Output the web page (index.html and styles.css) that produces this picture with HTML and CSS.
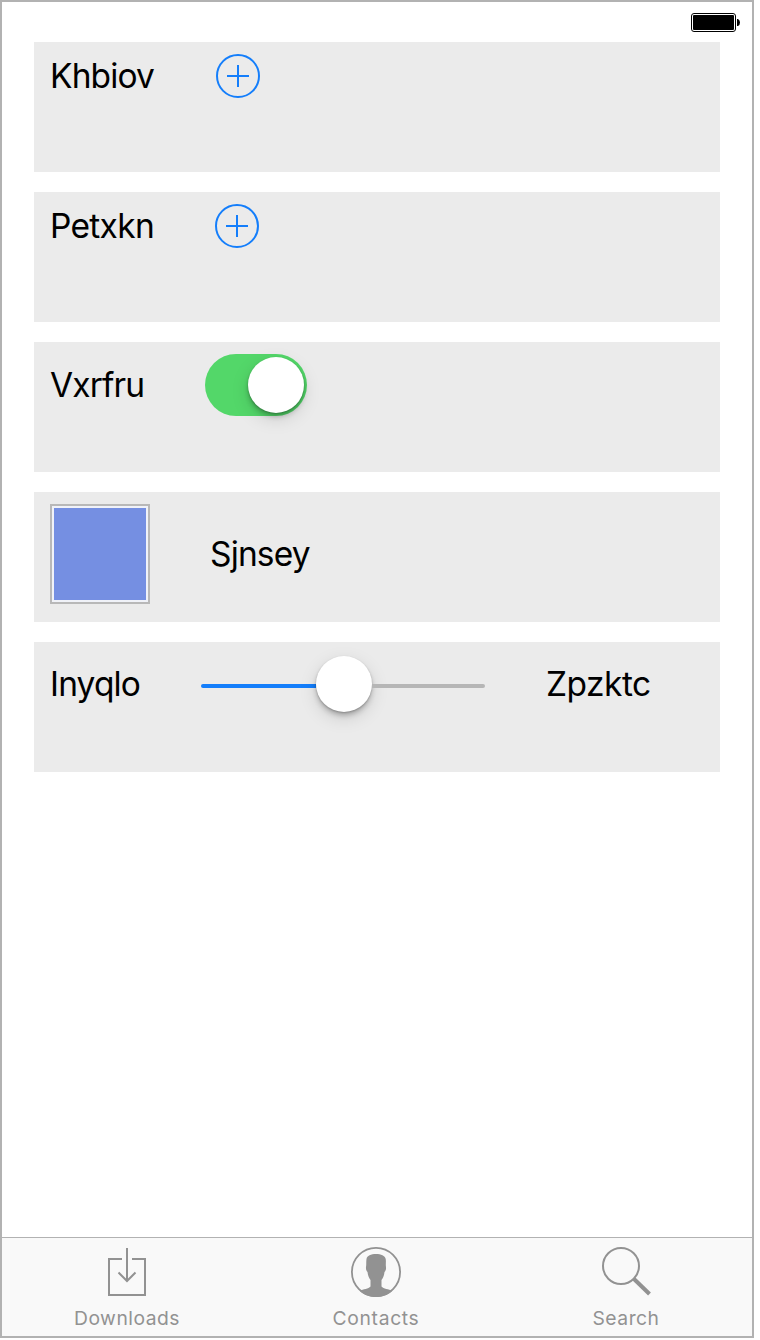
FILE: index.html
```html
<!DOCTYPE html>
<html lang="en">
<head>
<meta charset="utf-8">
<title>Settings</title>
<link rel="stylesheet" href="styles.css">
</head>
<body>
<div class="screen">
  <header class="status">
    <svg width="50" height="20" viewBox="0 0 50 20">
      <rect x=".5" y=".5" width="44" height="18" rx="2.5" fill="none" stroke="#000"/>
      <rect x="2" y="2" width="41" height="15" rx="1"/>
      <path d="M46 6h1q2 1 2 3.500t-2 3.500h-1z"/>
    </svg>
  </header>
  <main class="rows">
    <section class="row">
      <span class="label khbiov">Khbiov</span>
      <svg class="add" viewBox="0 0 44 44"><circle cx="22" cy="22" r="21"/><path d="M22 11v22M11 22h22"/></svg>
    </section>
    <section class="row">
      <span class="label petxkn">Petxkn</span>
      <svg class="add" viewBox="0 0 44 44"><circle cx="22" cy="22" r="21"/><path d="M22 11v22M11 22h22"/></svg>
    </section>
    <section class="row">
      <span class="label vxrfru">Vxrfru</span>
      <div class="toggle"><div class="knob"></div></div>
    </section>
    <section class="row">
      <div class="swatch"></div>
      <span class="label sjnsey">Sjnsey</span>
    </section>
    <section class="row">
      <span class="label inyqlo">Inyqlo</span>
      <div class="slider"><div class="track fill"></div><div class="knob"></div><div class="track rest"></div></div>
      <span class="label zpzktc">Zpzktc</span>
    </section>
  </main>
  <nav class="tabs">
    <div class="tab">
      <svg class="icon" viewBox="0 0 52 52"><path d="M21 12H8v36h36V12H31M26 1v33M17.500 25.500l8.500 8.500 8.500-8.500" fill="none" stroke="#929292" stroke-width="2"/></svg>
      <span class="caption downloads">Downloads</span>
    </div>
    <div class="tab">
      <svg class="icon" viewBox="0 0 52 52"><circle cx="26" cy="25" r="24.100" fill="none" stroke="#929292" stroke-width="1.800"/><path d="M16.500 12C17 8.500 21 7 26 7s9 1.500 9.700 5c.5 3-.2 5 .3 8 .3 3-.7 4-1.500 5-.5 4-1.500 6-3 8v6.500c2 2.500 7 2.500 11 4.200C38 48 32 50 26 50S14 48 9.500 43.700c4-1.700 9-1.700 11-4.200V33c-1.500-2-2.500-4-3-8-.8-1-1.800-2-1.500-5 .5-3 0-5 .5-8z" fill="#929292"/></svg>
      <span class="caption contacts">Contacts</span>
    </div>
    <div class="tab">
      <svg class="icon" viewBox="0 0 52 52" fill="none" stroke="#929292"><circle cx="21" cy="19" r="18" stroke-width="2"/><path d="M34 32l15.500 15" stroke-width="4"/></svg>
      <span class="caption search">Search</span>
    </div>
  </nav>
</div>
</body>
</html>
```
FILE: styles.css
```css
* { box-sizing: border-box; }
body { margin: 0; background: #fff; font-family: Inter, "Liberation Sans", sans-serif; }
svg { display: block; flex: none; }
.screen { width: 754px; height: 1338px; border: 2px solid #b2b2b2; display: flex; flex-direction: column; }
.status { height: 40px; padding: 11px 11px 0 0; display: flex; justify-content: flex-end; }
.rows { flex: 1; padding: 0 32px; display: flex; flex-direction: column; gap: 20px; }
.row { height: 130px; background: #ebebeb; padding: 12px 16px; display: flex; align-items: flex-start; }
.label { flex: none; font-size: 33.5px; line-height: 40px; color: #000; white-space: nowrap; letter-spacing: -.85px; }
.khbiov { width: 166px; padding-top: 2px; }
.petxkn { width: 165px; padding-top: 2px; letter-spacing: -.7px; }
.vxrfru { width: 155px; padding-top: 11px; }
.sjnsey { margin-left: 60px; padding-top: 30px; }
.inyqlo { width: 151px; padding-top: 10px; }
.zpzktc { margin-left: 61px; padding-top: 10px; letter-spacing: -.5px; }
.add { width: 44px; height: 44px; fill: none; stroke: #147efb; stroke-width: 2; }
.toggle { width: 102px; height: 62px; border-radius: 31px; background: #53d769; display: flex; justify-content: flex-end; padding: 3px; }
.knob { flex: none; width: 56px; height: 56px; border-radius: 50%; background: #fff; box-shadow: 0 4px 5px rgba(0,0,0,.2), 0 1px 2px rgba(0,0,0,.22), 0 6px 18px rgba(0,0,0,.13); }
.swatch { width: 100px; height: 100px; border: 2px solid #b8b8b8; padding: 2px; background: #758fe2 content-box; box-shadow: inset 0 0 0 2px #f0f2f8; }
.slider { width: 284px; height: 60px; display: flex; align-items: center; }
.track { height: 4px; margin-top: 4px; }
.fill { width: 115px; background: #147efb; border-radius: 2px 0 0 2px; }
.rest { flex: 1; background: #b6b6b6; border-radius: 0 2px 2px 0; }
.tabs { height: 99px; border-top: 1px solid #b2b2b2; background: #f9f9f9; display: grid; grid-template-columns: 250px 248px 252px; }
.tab { padding-top: 9px; display: flex; flex-direction: column; align-items: center; }
.icon { width: 52px; height: 52px; }
.caption { margin-top: 7px; font-size: 19.3px; line-height: 24px; color: #929292; letter-spacing: .5px; }
.contacts { letter-spacing: .65px; }
```
